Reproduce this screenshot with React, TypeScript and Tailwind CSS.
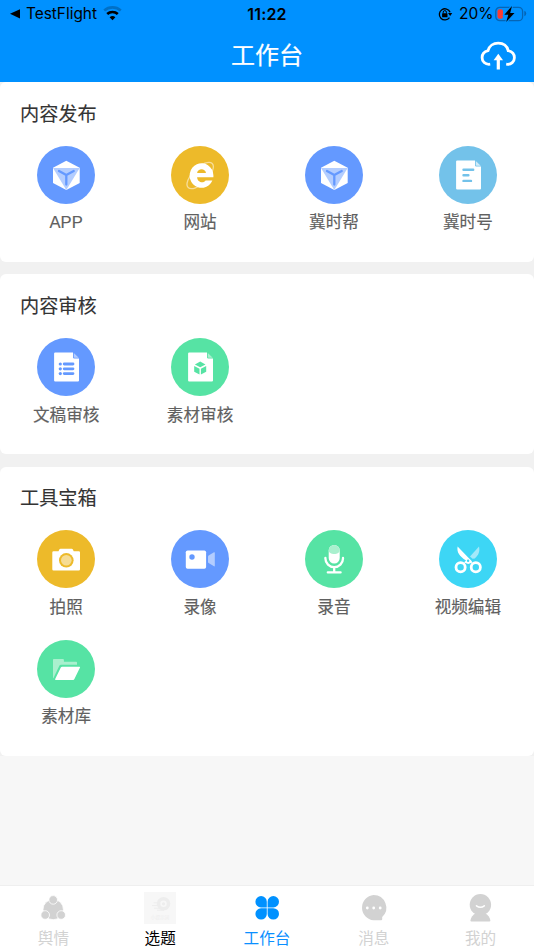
import type { ReactNode } from 'react'

type Tool = {
  label: string
  bg:    string
  icon:  ReactNode
}

type Section = {
  title: string
  tools: Tool[]
}

// Tool glyphs are drawn on a 58x58 canvas, the size of the round badge.
const CubeIcon = (
  <>
    <path d="M29.3 14.7 42.7 21.7V37L29.3 44 16 37V21.7z" fill="#fff" />
    <path d="M16 22H42.7L29.3 44z" fill="#b3cdff" />
    <path d="M22 25 29.3 29 36.7 25M29.3 29V38.5" fill="none" stroke="#6499ff" strokeWidth="2.3" strokeLinecap="round" strokeLinejoin="round" />
  </>
)

const BrowserIcon = (
  <>
    <ellipse cx="29.2" cy="29.5" rx="17" ry="7.6" transform="rotate(-45 29.2 29.5)" fill="none" stroke="#f7dd98" strokeWidth="1.3" />
    <circle cx="30.5" cy="29.5" r="10.5" fill="#edba2a" />
    <path
      d="M42.4 31.3V29.3A11.9 12.3 0 1 0 41.4 34.5H34.6C33 37.3 26.600 37.300 26.100 31.300zM26.100 26.900C26.800 21.900 34.300 21.900 35 26.900z"
      fill="#fff"
      fillRule="evenodd"
    />
  </>
)

const Sheet = ({ fold }: { fold: string }) => (
  <>
    <path d="M18.2 14.5H36V19.2Q36 20.5 37.3 20.5H42V42.4Q42 43.5 40.9 43.5H18.2Q17.1 43.5 17.1 42.4V15.6Q17.1 14.5 18.2 14.5z" fill="#fff" />
    <path d="M36.8 15 41.7 19.8H37.8Q36.8 19.8 36.8 18.8z" fill={fold} />
  </>
)

const ArticleIcon = (
  <>
    <Sheet fold="#d0ebf8" />
    <path d="M24.5 23.8H34.2M24.5 29.3H29.4M24.5 34.9H32" stroke="#73c2ea" strokeWidth="2.4" strokeLinecap="round" />
  </>
)

const ListIcon = (
  <>
    <Sheet fold="#b3cdff" />
    <path d="M27.2 26H36M27.2 30.8H36M27.2 35.6H36" stroke="#6499ff" strokeWidth="2.8" strokeLinecap="round" />
    <g fill="#6499ff">
      <circle cx="23.3" cy="26" r="1.6" />
      <circle cx="23.3" cy="30.8" r="1.6" />
      <circle cx="23.3" cy="35.6" r="1.6" />
    </g>
  </>
)

const MaterialIcon = (
  <>
    <Sheet fold="#a9f0ce" />
    <path d="M29.2 23.6 34.5 26.4 29.2 29.3 23.9 26.4zM23.2 27.9 28.5 30.7V36.6L23.2 33.7zM35.2 27.9 29.9 30.7V36.6L35.2 33.7z" fill="#56e3a4" />
  </>
)

const CameraIcon = (
  <>
    <path d="M16.5 21.2H21.5L22.3 19.4Q22.7 18.7 23.5 18.7H34.7Q35.5 18.7 35.9 19.4L36.7 21.2H41.8Q43 21.2 43 22.4V39.2Q43 40.4 41.8 40.4H16.5Q15.3 40.4 15.3 39.2V22.4Q15.3 21.2 16.5 21.2z" fill="#fff" />
    <circle cx="29.3" cy="30.3" r="7.3" fill="#edba2a" />
    <circle cx="29.3" cy="30.3" r="5.3" fill="#f6dc94" />
  </>
)

const VideoIcon = (
  <>
    <rect x="14.8" y="20.5" width="20.3" height="18.3" rx="1.8" fill="#fff" />
    <circle cx="21" cy="27" r="2.7" fill="#6499ff" />
    <path d="M37 26.6Q37 26 37.6 25.5L43 22.2Q43.8 21.9 43.8 22.8V35.8Q43.8 36.6 43 36.3L37.6 33Q37 32.6 37 32z" fill="#b3cdff" />
  </>
)

const MicIcon = (
  <>
    <rect x="23.7" y="15" width="11" height="18.5" rx="5.5" fill="#fff" />
    <path d="M23.7 20.5A5.5 5.5 0 0 1 34.7 20.5C34.7 22.8 32.2 24 29.2 24S23.7 22.8 23.7 20.5z" fill="#a9f0ce" />
    <path d="M20.4 28V28.6A8.8 8.6 0 0 0 38 28.6V28M29.2 37.5V42.2M22.8 42.4H35.6" fill="none" stroke="#fff" strokeWidth="2.3" strokeLinecap="round" />
  </>
)

const ScissorsIcon = (
  <>
    <path d="M40 16.5C41 21 40 24.5 35.8 28.5L33.5 28.7 31 26.5z" fill="#a3e9fa" />
    <path d="M18.6 16.4 29.2 27.4 32.2 30.6 33.5 32.5 29.2 34 25 32.5 27 30.6C20.5 25.8 17.6 22.5 18.6 16.4z" fill="#fff" />
    <circle cx="29.1" cy="30.8" r="1.2" fill="#3dd6f5" />
    <circle cx="21.6" cy="37.2" r="4.6" fill="#3dd6f5" stroke="#fff" strokeWidth="2.8" />
    <circle cx="36.8" cy="37.2" r="4.6" fill="#3dd6f5" stroke="#fff" strokeWidth="2.8" />
  </>
)

const FolderIcon = (
  <>
    <path d="M16.8 19H26Q26.9 19 26.9 19.9V21.8H39.2Q40 21.8 40 22.6V24.8H24Q22.8 24.8 22.2 26L16.4 38.2 16 38V19.8Q16 19 16.8 19z" fill="#a9f0ce" />
    <path d="M25.2 26.7H42.5Q43.4 26.7 43 27.6L37.4 39.1Q37 40 36.1 40H18.7Q17.8 40 18.2 39.1L23.8 27.6Q24.2 26.7 25.2 26.7z" fill="#fff" />
  </>
)

const sections: Section[] = [
  {
    title: '内容发布',
    tools: [
      { label: 'APP', bg: 'bg-[#6499ff]', icon: CubeIcon },
      { label: '网站', bg: 'bg-[#edba2a]', icon: BrowserIcon },
      { label: '冀时帮', bg: 'bg-[#6499ff]', icon: CubeIcon },
      { label: '冀时号', bg: 'bg-[#73c2ea]', icon: ArticleIcon },
    ],
  },
  {
    title: '内容审核',
    tools: [
      { label: '文稿审核', bg: 'bg-[#6499ff]', icon: ListIcon },
      { label: '素材审核', bg: 'bg-[#56e3a4]', icon: MaterialIcon },
    ],
  },
  {
    title: '工具宝箱',
    tools: [
      { label: '拍照', bg: 'bg-[#edba2a]', icon: CameraIcon },
      { label: '录像', bg: 'bg-[#6499ff]', icon: VideoIcon },
      { label: '录音', bg: 'bg-[#56e3a4]', icon: MicIcon },
      { label: '视频编辑', bg: 'bg-[#3dd6f5]', icon: ScissorsIcon },
      { label: '素材库', bg: 'bg-[#56e3a4]', icon: FolderIcon },
    ],
  },
]

const tabs = [
  {
    label: '舆情',
    color: 'text-[#d2d2d2]',
    icon: (
      <g fill="#d2d2d2" stroke="#fff" strokeWidth="0.8">
        <circle cx="16.2" cy="17.5" r="10.2" />
        <circle cx="16.2" cy="7.9" r="4.3" />
        <circle cx="8.2" cy="23" r="4.3" />
        <circle cx="24.2" cy="23" r="4.3" />
      </g>
    ),
  },
  {
    label: '选题',
    color: 'text-black',
    icon: (
      <>
        <rect width="32" height="32" fill="#f7f7f7" />
        <circle cx="19.5" cy="11.8" r="5" fill="none" stroke="#ededed" strokeWidth="3.6" />
        <circle cx="19.5" cy="11.8" r="1.6" fill="#ededed" />
        <path d="M9.5 10.8H15M8 13.6H16M10 16.2H18M13 18.2H20" stroke="#ededed" strokeWidth="1" />
        <text x="16" y="26.6" fontSize="4.6" textAnchor="middle" fill="#ededed">小提示词</text>
      </>
    ),
  },
  {
    label: '工作台',
    color: 'text-[#0a8fff]',
    icon: (
      <g fill="#0091ff">
        <path d="M15.8 15.4H10A5.7 5.7 0 1 1 15.8 9.7z" />
        <path d="M16.6 15.4H22.3A5.7 5.7 0 1 0 16.6 9.7z" />
        <path d="M15.8 16.2H10A5.7 5.7 0 1 0 15.8 21.9z" />
        <path d="M16.6 16.2H22.3A5.7 5.7 0 1 1 16.6 21.9z" />
      </g>
    ),
  },
  {
    label: '消息',
    color: 'text-[#d2d2d2]',
    icon: (
      <>
        <path d="M15.6 3A12.7 12.7 0 0 1 24.2 25V27.3Q24.2 28.3 23.2 28.3H15.6A12.7 12.7 0 0 1 15.6 3z" fill="#d2d2d2" />
        <g fill="#fff">
          <circle cx="9.3" cy="16" r="1.4" />
          <circle cx="15.7" cy="16" r="1.4" />
          <circle cx="22.2" cy="16" r="1.4" />
        </g>
      </>
    ),
  },
  {
    label: '我的',
    color: 'text-[#d2d2d2]',
    icon: (
      <>
        <circle cx="15.4" cy="12.8" r="10.7" fill="#d2d2d2" />
        <path d="M10.9 21H19.9C22.9 22.5 24.9 25.5 25.4 28.5Q25.4 29.6 24.4 29.6H6.4Q5.4 29.6 5.4 28.5C5.9 25.5 7.9 22.5 10.9 21z" fill="#d2d2d2" />
        <path d="M11.5 13.8Q15.4 16.6 19.3 13.8" fill="none" stroke="#fff" strokeWidth="1.6" strokeLinecap="round" />
      </>
    ),
  },
]

function StatusBar() {
  return (
    <div className="grid h-7 grid-cols-3 items-center font-['Inter',sans-serif] text-[16px] leading-7 text-black">
      <div className="flex items-center pl-[9px]">
        <svg className="h-3 w-3" viewBox="0 0 12 12">
          <path d="M11 1.2V10.4L1 5.8z" fill="#000" />
        </svg>
        <span className="ml-[5px] w-[72px] text-[15.4px]">TestFlight</span>
        <svg className="ml-[5px] h-[16px] w-[19px]" viewBox="0 0 19 16">
          <path d="M1.2 4.5A12.5 12.5 0 0 1 17.8 4.5" fill="none" stroke="#0070c6" strokeWidth="2.6" />
          <path d="M4.2 8A8 8 0 0 1 14.8 8" fill="none" stroke="#000" strokeWidth="2.7" />
          <path d="M9.5 14.2 6.6 11.3A4.3 4.3 0 0 1 12.4 11.3z" fill="#000" />
        </svg>
      </div>
      <div className="text-center font-semibold tracking-[0.2px]">11:22</div>
      <div className="flex items-center justify-end pr-[7px]">
        <svg className="h-[14px] w-[15px]" viewBox="0 0 15 14">
          <path d="M11.5 10.6A5.6 5.6 0 1 1 12.1 5.2" fill="none" stroke="#000" strokeWidth="1.3" />
          <path d="M10 6H14.2L12.2 9z" fill="#000" />
          <rect x="4.1" y="6.3" width="5.4" height="4" rx="0.6" fill="#000" />
          <path d="M5.2 6.5V5.2A1.6 1.6 0 0 1 8.4 5.2V6.5" fill="none" stroke="#000" strokeWidth="1" />
        </svg>
        <span className="ml-[6px] w-[33px] text-[15.5px]">20%</span>
        <svg className="ml-[3px] h-[16px] w-[32px]" viewBox="0 0 32 16">
          <rect x="0.8" y="1.3" width="26.8" height="13.4" rx="4" fill="none" stroke="#0565b5" strokeWidth="1.3" />
          <path d="M29.3 4.8Q31.2 5.5 31.2 7.5T29.3 10.2z" fill="#0565b5" />
          <rect x="2.5" y="3.2" width="5.5" height="9.6" rx="2" fill="#fb3b32" />
          <path d="M17 0 9.3 8.8H13.3L11.2 16 19.5 6.9H15.2z" fill="#000" stroke="#0091ff" strokeWidth="2" paintOrder="stroke" />
        </svg>
      </div>
    </div>
  )
}

function Header() {
  return (
    <header className="h-[82.3px] shrink-0 bg-[#0091ff]">
      <StatusBar />
      <div className="grid h-[54px] grid-cols-3 items-center">
        <h1 className="col-start-2 pt-px text-center text-[24px] leading-[54px] text-white [-webkit-text-stroke:0.2px]">工作台</h1>
        <svg className="mr-[17px] h-[30px] w-[38px] justify-self-end" viewBox="0 0 38 30" fill="none">
          <path d="M11.2 23.2C6 23.9 3.1 20.3 3.1 16.8 3.1 13.2 5.5 10.5 9 9.7 10.2 4.8 14.5 2.2 19.2 2.2S28 4.8 29.2 9.7C32.8 10.5 35.4 13.2 35.4 16.8 35.4 20.4 32.4 23.9 27.2 23.2" stroke="#fff" strokeWidth="2.8" />
          <path d="M19.3 28.5V17" stroke="#fff" strokeWidth="3.2" />
          <path d="M14.6 19.3 19.3 12.8 24 19.3z" fill="#fff" />
        </svg>
      </div>
    </header>
  )
}

function ToolSection({ title, tools }: Section) {
  return (
    <section className="rounded-[6px] bg-white pt-[17.3px] pb-[26.2px]">
      <h2 className="pl-5 text-[19.2px] leading-[30px] text-[#333] [-webkit-text-stroke:0.12px]">{title}</h2>
      <div className="-mx-[0.8px] mt-[16.4px] grid grid-cols-4 gap-y-[20px]">
        {tools.map(({ label, bg, icon }) => (
          <div key={label} className="flex flex-col items-center">
            <div className={`h-[58px] w-[58px] rounded-full ${bg}`}>
              <svg className="h-[58px] w-[58px]" viewBox="0 0 58 58">{icon}</svg>
            </div>
            <span className="mt-[6.4px] h-[25.4px] text-[16.6px] leading-[26px] text-[#606060] [-webkit-text-stroke:0.15px]">{label}</span>
          </div>
        ))}
      </div>
    </section>
  )
}

function TabBar() {
  return (
    <nav className="flex h-[65px] shrink-0 border-t border-[#efefef] bg-white pt-[6px]">
      {tabs.map(({ label, color, icon }) => (
        <div key={label} className="flex flex-1 flex-col items-center">
          <svg className="h-8 w-8 shrink-0" viewBox="0 0 32 32">{icon}</svg>
          <span className={`mt-[1.5px] text-[15.6px] leading-[25px] ${color}`}>{label}</span>
        </div>
      ))}
    </nav>
  )
}

export default function App() {
  return (
    <div className="flex h-[950px] w-[534px] flex-col overflow-hidden bg-[#f7f7f7] font-['Liberation_Sans','Noto_Sans_CJK_SC',sans-serif]">
      <Header />
      <main className="flex-1">
        <div className="flex flex-col gap-[12.5px] bg-[#f1f1f1]">
          {sections.map(section => (
            <ToolSection key={section.title} {...section} />
          ))}
        </div>
      </main>
      <TabBar />
    </div>
  )
}
